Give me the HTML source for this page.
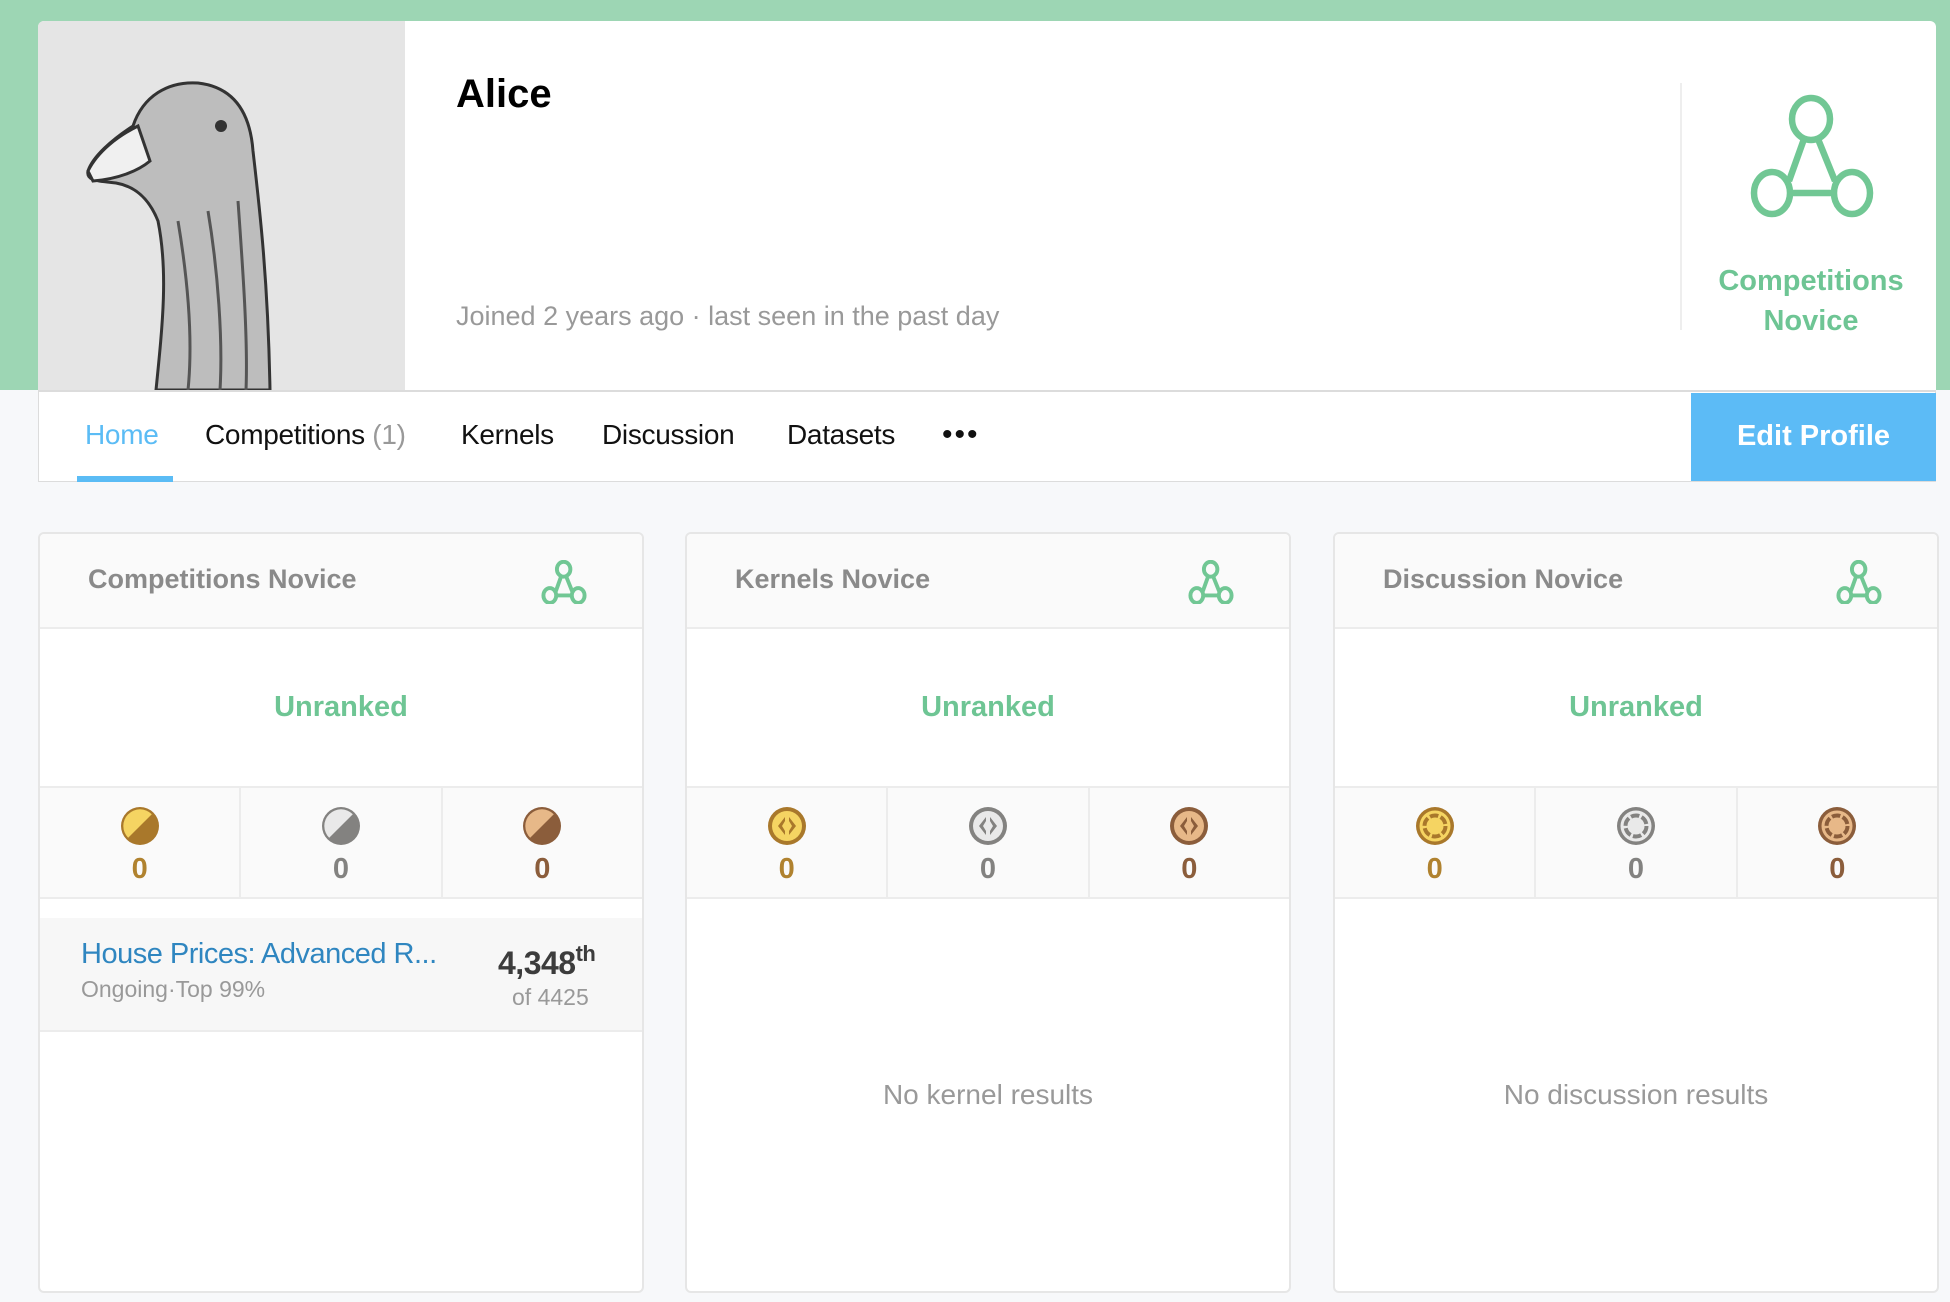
<!DOCTYPE html>
<html><head><meta charset="utf-8"><style>
*{margin:0;padding:0;box-sizing:border-box}
body{width:1950px;height:1302px;background:#f7f8fa;font-family:"Liberation Sans",sans-serif;position:relative;overflow:hidden}
.abs{position:absolute}
.banner{left:0;top:0;width:1950px;height:390px;background:#9dd6b4}
.top{left:38px;top:21px;width:1898px;height:369px;background:#fff;border-radius:6px 6px 0 0;overflow:hidden}
.avatar{left:0;top:0;width:367px;height:369px;background:#e5e5e5}
.nav{left:38px;top:390px;width:1898px;height:92px;background:#fff;border:1px solid #dcdcdc;border-top:2px solid #dcdcdc}
.nav span{position:absolute;top:27px;font-size:28px;color:#111;letter-spacing:-0.3px}
.card{width:606px;height:761px;top:532px;background:#fff;border:2px solid #e6e6e6;border-radius:6px;overflow:hidden}
.hd{position:absolute;left:0;top:0;width:100%;height:95px;background:#fafafa;border-bottom:2px solid #ececec}
.hd b{position:absolute;left:48px;top:30px;font-size:27px;color:#8a8a8a}
.hd svg{position:absolute;left:500px;top:26px}
.unr{position:absolute;left:0;width:100%;text-align:center;font-size:29px;font-weight:bold;color:#6ec594}
.medals{position:absolute;left:0;top:252px;width:100%;height:113px;background:#fafafa;border-top:2px solid #ececec;border-bottom:2px solid #ececec;display:flex}
.medals div{flex:1;position:relative;border-right:2px solid #ececec;text-align:center}
.medals div:last-child{border-right:none}
.medals svg{position:absolute;left:50%;margin-left:-20px;top:18px}
.medals b{position:absolute;left:0;width:100%;top:65px;font-size:29px}
.none{position:absolute;left:0;width:100%;top:545px;text-align:center;font-size:28px;color:#999}
</style></head><body>
<div class="abs banner"></div>
<div class="abs top">
 <div class="abs avatar">
  <svg width="367" height="369" viewBox="0 0 367 369">
   <path d="M118 369 C125 300 130 250 120 200 C110 175 95 165 78 162 C60 160 48 160 50 150 C55 135 75 118 95 105 C105 75 130 60 160 62 C195 66 212 90 215 130 C222 190 230 260 232 369 Z" fill="#bdbdbd" stroke="#333" stroke-width="3"/>
   <path d="M50 150 C60 130 80 115 100 105 L112 140 C100 150 80 158 55 160 Z" fill="#f0f0f0" stroke="#333" stroke-width="3"/>
   <circle cx="183" cy="105" r="6" fill="#333"/>
   <path d="M140 200 C150 260 155 320 150 369 M170 190 C180 250 185 320 182 369 M200 180 C205 250 210 320 208 369" stroke="#555" stroke-width="3" fill="none"/>
  </svg>
 </div>
 <div class="abs" style="left:418px;top:51px;font-size:40px;font-weight:bold;color:#000">Alice</div>
 <div class="abs" style="left:418px;top:280px;font-size:27px;color:#999">Joined 2 years ago · last seen in the past day</div>
 <div class="abs" style="left:1642px;top:62px;width:2px;height:247px;background:#eee"></div>
 <svg class="abs" style="left:1700px;top:70px" width="150" height="130" viewBox="0 0 150 130" fill="none" stroke="#71c794" stroke-width="6.5">
  <ellipse cx="73" cy="28" rx="19" ry="21"/><ellipse cx="34" cy="102" rx="18" ry="21"/><ellipse cx="114" cy="102" rx="18" ry="21"/>
  <line x1="66" y1="48" x2="51" y2="90"/><line x1="80" y1="48" x2="97" y2="90"/><line x1="52" y1="102" x2="96" y2="102"/>
 </svg>
 <div class="abs" style="left:1658px;top:240px;width:230px;text-align:center;font-size:29px;line-height:40px;font-weight:bold;color:#6ec594">Competitions<br>Novice</div>
</div>
<div class="abs nav">
 <span style="left:46px;color:#5bbcf5">Home</span>
 <span style="left:166px">Competitions <span style="position:static;color:#999">(1)</span></span>
 <span style="left:422px">Kernels</span>
 <span style="left:563px">Discussion</span>
 <span style="left:748px">Datasets</span>
 <span style="left:903px;top:26px;font-size:30px;letter-spacing:2px">•••</span>
 <div class="abs" style="left:38px;top:84px;width:96px;height:6px;background:#5bbcf5"></div>
 <div class="abs" style="left:1652px;top:1px;width:245px;height:88px;background:#5cbbf6;color:#fff;font-size:29px;font-weight:bold;text-align:center;line-height:86px">Edit Profile</div>
</div>

<!-- card 1 -->
<div class="abs card" style="left:38px">
 <div class="hd"><b>Competitions Novice</b><svg width="48" height="44" viewBox="10 2 128 124" fill="none" stroke="#71c794" stroke-width="11"><ellipse cx="73" cy="28" rx="19" ry="21"/><ellipse cx="34" cy="102" rx="18" ry="21"/><ellipse cx="114" cy="102" rx="18" ry="21"/><line x1="66" y1="48" x2="51" y2="90"/><line x1="80" y1="48" x2="97" y2="90"/><line x1="52" y1="102" x2="96" y2="102"/></svg></div>
 <div class="unr" style="top:157px">Unranked</div>
 <div class="medals">
  <div><svg width="40" height="40" viewBox="0 0 40 40"><circle cx="20" cy="20" r="19" fill="#a9782b"/><path d="M8.2 31.8 A16.5 16.5 0 0 1 31.8 8.2 Z" fill="#f5d462"/></svg><b style="color:#b0822f">0</b></div>
  <div><svg width="40" height="40" viewBox="0 0 40 40"><circle cx="20" cy="20" r="19" fill="#838280"/><path d="M8.2 31.8 A16.5 16.5 0 0 1 31.8 8.2 Z" fill="#e9e9e9"/></svg><b style="color:#838280">0</b></div>
  <div><svg width="40" height="40" viewBox="0 0 40 40"><circle cx="20" cy="20" r="19" fill="#8b5d3b"/><path d="M8.2 31.8 A16.5 16.5 0 0 1 31.8 8.2 Z" fill="#e7b888"/></svg><b style="color:#8b5d3b">0</b></div>
 </div>
 <div class="abs" style="left:0;top:384px;width:100%;height:114px;background:#f7f7f7;border-bottom:2px solid #ececec">
  <div class="abs" style="left:41px;top:20px;font-size:29px;color:#2f86c0;letter-spacing:-0.5px">House Prices: Advanced R...</div>
  <div class="abs" style="left:41px;top:58px;font-size:23px;color:#999">Ongoing·Top 99%</div>
  <div class="abs" style="left:458px;top:23px;font-size:32px;font-weight:bold;color:#3c3c3c;letter-spacing:-0.5px">4,348<sup style="font-size:22px;vertical-align:13px">th</sup></div>
  <div class="abs" style="left:472px;top:66px;font-size:23px;color:#999">of 4425</div>
 </div>
</div>

<!-- card 2 -->
<div class="abs card" style="left:685px">
 <div class="hd"><b>Kernels Novice</b><svg width="48" height="44" viewBox="10 2 128 124" fill="none" stroke="#71c794" stroke-width="11"><ellipse cx="73" cy="28" rx="19" ry="21"/><ellipse cx="34" cy="102" rx="18" ry="21"/><ellipse cx="114" cy="102" rx="18" ry="21"/><line x1="66" y1="48" x2="51" y2="90"/><line x1="80" y1="48" x2="97" y2="90"/><line x1="52" y1="102" x2="96" y2="102"/></svg></div>
 <div class="unr" style="top:157px">Unranked</div>
 <div class="medals">
  <div><svg width="40" height="40" viewBox="0 0 40 40"><circle cx="20" cy="20" r="19" fill="#a9782b"/><circle cx="20" cy="20" r="15" fill="#f5d462"/><path d="M18 11 L11 20 L18 29 L18 25 L15 20 L18 15Z M22 11 L29 20 L22 29 L22 25 L25 20 L22 15Z" fill="#a9782b"/></svg><b style="color:#b0822f">0</b></div>
  <div><svg width="40" height="40" viewBox="0 0 40 40"><circle cx="20" cy="20" r="19" fill="#838280"/><circle cx="20" cy="20" r="15" fill="#e9e9e9"/><path d="M18 11 L11 20 L18 29 L18 25 L15 20 L18 15Z M22 11 L29 20 L22 29 L22 25 L25 20 L22 15Z" fill="#838280"/></svg><b style="color:#838280">0</b></div>
  <div><svg width="40" height="40" viewBox="0 0 40 40"><circle cx="20" cy="20" r="19" fill="#8b5d3b"/><circle cx="20" cy="20" r="15" fill="#e7b888"/><path d="M18 11 L11 20 L18 29 L18 25 L15 20 L18 15Z M22 11 L29 20 L22 29 L22 25 L25 20 L22 15Z" fill="#8b5d3b"/></svg><b style="color:#8b5d3b">0</b></div>
 </div>
 <div class="none">No kernel results</div>
</div>

<!-- card 3 -->
<div class="abs card" style="left:1333px">
 <div class="hd"><b>Discussion Novice</b><svg width="48" height="44" viewBox="10 2 128 124" fill="none" stroke="#71c794" stroke-width="11"><ellipse cx="73" cy="28" rx="19" ry="21"/><ellipse cx="34" cy="102" rx="18" ry="21"/><ellipse cx="114" cy="102" rx="18" ry="21"/><line x1="66" y1="48" x2="51" y2="90"/><line x1="80" y1="48" x2="97" y2="90"/><line x1="52" y1="102" x2="96" y2="102"/></svg></div>
 <div class="unr" style="top:157px">Unranked</div>
 <div class="medals">
  <div><svg width="40" height="40" viewBox="0 0 40 40"><circle cx="20" cy="20" r="19" fill="#a9782b"/><circle cx="20" cy="20" r="15.5" fill="#f5d462"/><circle cx="20" cy="20" r="10.5" fill="none" stroke="#a9782b" stroke-width="4" stroke-dasharray="8.5 2.5"/></svg><b style="color:#b0822f">0</b></div>
  <div><svg width="40" height="40" viewBox="0 0 40 40"><circle cx="20" cy="20" r="19" fill="#838280"/><circle cx="20" cy="20" r="15.5" fill="#e9e9e9"/><circle cx="20" cy="20" r="10.5" fill="none" stroke="#838280" stroke-width="4" stroke-dasharray="8.5 2.5"/></svg><b style="color:#838280">0</b></div>
  <div><svg width="40" height="40" viewBox="0 0 40 40"><circle cx="20" cy="20" r="19" fill="#8b5d3b"/><circle cx="20" cy="20" r="15.5" fill="#e7b888"/><circle cx="20" cy="20" r="10.5" fill="none" stroke="#8b5d3b" stroke-width="4" stroke-dasharray="8.5 2.5"/></svg><b style="color:#8b5d3b">0</b></div>
 </div>
 <div class="none">No discussion results</div>
</div>
</body></html>
